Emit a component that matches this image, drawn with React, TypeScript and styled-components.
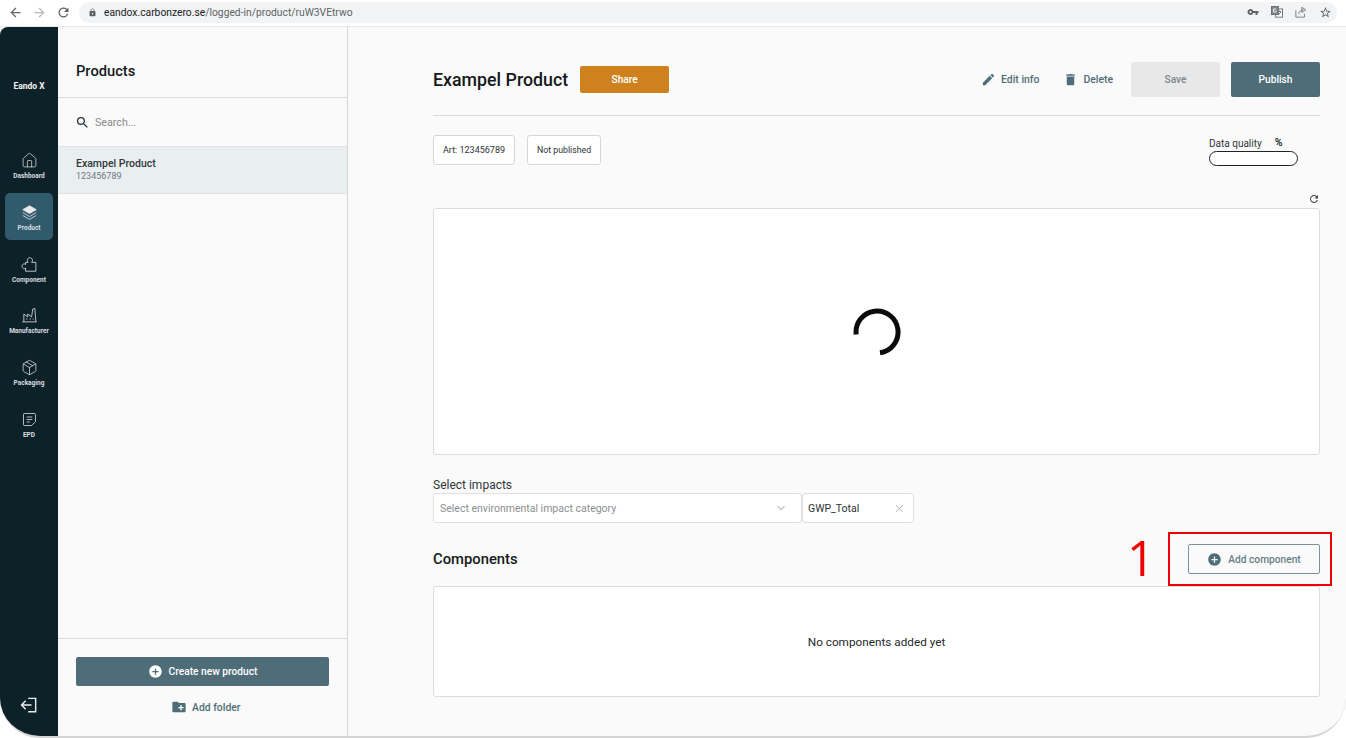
import styled, { createGlobalStyle } from "styled-components";
import { FC, ReactNode } from "react";
import { Home, Package } from "lucide-react";
import {
  MdArrowBack,
  MdArrowForward,
  MdRefresh,
  MdLock,
  MdVpnKey,
  MdStarBorder,
  MdSearch,
  MdEdit,
  MdDelete,
  MdAddCircle,
  MdCreateNewFolder,
  MdClose,
  MdKeyboardArrowDown,
} from "react-icons/md";

const GlobalStyle = createGlobalStyle`
  html, body { margin: 0; padding: 0; background: #ffffff; }
  body { font-family: Roboto, "Liberation Sans", sans-serif; width: 1346px; height: 738px; overflow: hidden; }
  * { box-sizing: border-box; }
`;

const Page = styled.div`
  position: relative;
  width: 1346px;
  height: 738px;
  display: flex;
  flex-direction: column;
  background: #ffffff;
  overflow: hidden;
`;

const BrowserBar = styled.div`
  height: 27px;
  flex: none;
  display: flex;
  align-items: center;
  padding: 0 9px 2px 8px;
  background: #ffffff;
  border-bottom: 1px solid #e6e7e8;
  color: #5f6368;
`;

const NavIcons = styled.div`
  display: flex;
  align-items: center;
  gap: 9px;
  width: 71px;
`;

const UrlPill = styled.div`
  flex: 1;
  height: 21px;
  padding: 0 5px 0 9px;
  display: flex;
  align-items: center;
  gap: 7px;
  border-radius: 11px;
  background: #f1f3f4;
`;

const UrlText = styled.span`
  flex: 1;
  font-size: 10.3px;
  color: #5f6368;
  b { font-weight: 400; color: #202124; }
`;

const UrlIcons = styled.div`
  display: flex;
  align-items: center;
  gap: 12px;
`;

const Frame = styled.div`
  flex: 1;
  min-height: 0;
  display: flex;
  background: #fafafa;
  border-bottom: 2px solid #d4d4d4;
  border-radius: 8px 0 40px 40px;
  overflow: hidden;
`;

const Sidebar = styled.nav`
  width: 58px;
  flex: none;
  display: flex;
  flex-direction: column;
  align-items: center;
  background: #0d2129;
  color: #e8eaeb;
`;

const Logo = styled.div`
  margin-top: 53px;
  height: 12px;
  line-height: 12px;
  font-size: 8.5px;
  font-weight: 700;
  color: #f2f4f4;
`;

const NavList = styled.div`
  margin-top: 49px;
  width: 100%;
  display: flex;
  flex-direction: column;
  align-items: center;
  gap: 4.8px;
`;

const NavItem = styled.div<{ $active?: boolean }>`
  width: 48px;
  height: 47px;
  padding-bottom: 7px;
  display: flex;
  flex-direction: column;
  align-items: center;
  justify-content: flex-end;
  gap: 3px;
  border-radius: 5px;
  background: ${(p) => (p.$active ? "#325a6d" : "transparent")};
`;

const NavLabel = styled.span`
  font-size: 6.5px;
  line-height: 9px;
  font-weight: 700;
  white-space: nowrap;
  color: #d9dee0;
`;

const NavSvg = styled.svg`
  width: 17px;
  height: 17px;
  fill: none;
  stroke: currentColor;
  stroke-width: 1.1;
`;

const SignOut = styled.svg`
  margin-top: auto;
  margin-bottom: 21px;
  width: 20px;
  height: 20px;
  fill: none;
  stroke: #eceeee;
  stroke-width: 1.7;
`;

const ProductsPanel = styled.aside`
  width: 290px;
  flex: none;
  display: flex;
  flex-direction: column;
  border-right: 1px solid #d6d6d6;
`;

const PanelTitle = styled.h2`
  margin: 0;
  height: 71px;
  padding: 35px 18px 0;
  font-size: 14.7px;
  line-height: 18px;
  font-weight: 500;
  color: #14191c;
  border-bottom: 1px solid #dcdcdc;
`;

const SearchRow = styled.div`
  height: 48px;
  padding: 0 18px 0 17px;
  display: flex;
  align-items: center;
  gap: 5px;
  font-size: 10.7px;
  color: #8a8a8a;
  svg { color: #2b3438; }
`;

const ProductRow = styled.div`
  height: 48px;
  padding: 11px 18px 0;
  background: #e9eef0;
  border-top: 1px solid #e2e2e2;
  border-bottom: 1px solid #e2e2e2;
  font-size: 10.5px;
  line-height: 12px;
  color: #30383c;
  font-weight: 500;
`;

const ProductNumber = styled.div`
  font-size: 9px;
  line-height: 12px;
  font-weight: 400;
  color: #6f7a7f;
`;

const PanelFooter = styled.div`
  margin-top: auto;
  height: 98px;
  padding: 18px 18px 0;
  border-top: 1px solid #dcdcdc;
  display: flex;
  flex-direction: column;
  align-items: flex-start;
`;

const Button = styled.button<{ $variant: "primary" | "orange" | "disabled" | "outline"; $width: number; $height: number }>`
  width: ${(p) => p.$width}px;
  height: ${(p) => p.$height}px;
  flex: none;
  display: flex;
  align-items: center;
  justify-content: center;
  gap: 6px;
  padding: 0;
  font-family: inherit;
  font-size: 10.2px;
  font-weight: 500;
  border-radius: 2px;
  border: ${(p) => (p.$variant === "outline" ? "1px solid #7e929b" : "none")};
  background: ${(p) =>
    p.$variant === "primary" ? "#4f6d78" : p.$variant === "orange" ? "#cf811e" : p.$variant === "disabled" ? "#e8e8e8" : "#fafafa"};
  color: ${(p) => (p.$variant === "disabled" ? "#7f8689" : p.$variant === "outline" ? "#667c86" : "#ffffff")};
  svg { color: ${(p) => (p.$variant === "outline" ? "#4f6d78" : "#ffffff")}; }
`;

const TextAction = styled.span`
  display: flex;
  align-items: center;
  gap: 5px;
  font-size: 10.4px;
  font-weight: 500;
  color: #4f6d78;
`;

const AddFolder = styled(TextAction)`
  margin: 13px 0 0 95px;
`;

const Main = styled.main`
  flex: 1;
  min-width: 0;
  padding: 35px 26px 0 85px;
  display: flex;
  flex-direction: column;
`;

const Header = styled.header`
  height: 54px;
  flex: none;
  display: flex;
  align-items: flex-start;
  border-bottom: 1px solid #dcdcdc;
`;

const Title = styled.h1`
  margin: 0 12px 0 0;
  font-size: 17.8px;
  line-height: 35px;
  font-weight: 500;
  color: #15191b;
`;

const ShareWrap = styled.div`
  padding-top: 4px;
`;

const HeaderActions = styled.div`
  margin-left: auto;
  display: flex;
  align-items: center;
  height: 35px;
`;

const Actions = styled.div`
  display: flex;
  gap: 24px;
  margin-right: 18px;
`;

const Publish = styled.div`
  display: flex;
  gap: 11px;
`;

const InfoRow = styled.div`
  height: 92px;
  flex: none;
  padding-top: 19px;
  display: flex;
  align-items: flex-start;
  gap: 12px;
`;

const Chip = styled.div`
  height: 30px;
  padding: 0 9px;
  display: flex;
  align-items: center;
  font-size: 9px;
  color: #2d3336;
  background: #ffffff;
  border: 1px solid #d6d6d6;
  border-radius: 3px;
`;

const StatusChip = styled(Chip)`
  font-size: 8.75px;
`;

const Quality = styled.div`
  margin-left: auto;
  margin-right: 22px;
  padding-top: 2px;
  width: 89px;
`;

const QualityLabel = styled.div`
  display: flex;
  gap: 13px;
  font-size: 10px;
  line-height: 14px;
  color: #2e3336;
  span { font-size: 10.5px; font-weight: 700; margin-top: -1px; }
`;

const QualityBar = styled.div`
  height: 15px;
  background: #ffffff;
  border: 1px solid #1d2326;
  border-radius: 8px;
`;

const ChartTools = styled.div`
  position: relative;
  flex: none;
  display: flex;
`;

const ChartBox = styled.div`
  height: 247px;
  flex: 1;
  display: flex;
  align-items: center;
  justify-content: center;
  background: #ffffff;
  border: 1px solid #dcdcdc;
  border-radius: 3px;
`;

const Spinner = styled.svg`
  width: 48px;
  height: 48px;
`;

const RefreshIcon = styled.div`
  position: absolute;
  top: -15px;
  right: 0;
  display: flex;
  color: #3d4448;
`;

const ImpactLabel = styled.div`
  margin-top: 22px;
  font-size: 12px;
  line-height: 16px;
  color: #31373a;
`;

const ImpactRow = styled.div`
  display: flex;
  height: 30px;
`;

const SelectBox = styled.div`
  width: 369px;
  padding: 0 12px 0 6px;
  display: flex;
  align-items: center;
  justify-content: space-between;
  font-size: 10.5px;
  color: #8b8f91;
  background: #ffffff;
  border: 1px solid #e0e0e0;
  border-radius: 3px;
  svg { color: #c5c8ca; }
`;

const TagBox = styled(SelectBox)`
  width: 112px;
  padding: 0 7px 0 5px;
  color: #2d3336;
`;

const ComponentsHead = styled.div`
  height: 63px;
  flex: none;
  padding-top: 21px;
  display: flex;
  align-items: flex-start;
  justify-content: space-between;
`;

const SectionTitle = styled.h3`
  margin: 0;
  font-size: 14.8px;
  line-height: 30px;
  font-weight: 500;
  color: #15191b;
`;

const EmptyBox = styled.div`
  height: 111px;
  flex: none;
  display: flex;
  align-items: center;
  justify-content: center;
  font-size: 11.75px;
  color: #24292c;
  background: #ffffff;
  border: 1px solid #dcdcdc;
  border-radius: 3px;
`;

const Callout = styled.div`
  position: absolute;
  left: 1168px;
  top: 532px;
  width: 164px;
  height: 54px;
  border: 2px solid #f00000;
`;

const CalloutNumber = styled.span`
  position: absolute;
  left: 1127px;
  top: 524px;
  font-family: "Open Sans", sans-serif;
  font-size: 49px;
  line-height: 66px;
  color: #f00000;
`;

const LayersIcon = () => (
  <NavSvg viewBox="0 0 24 24">
    <path d="M12 2.5 L21.5 8 L12 13.5 L2.5 8Z" fill="currentColor" />
    <path d="M2.5 12.2 L12 17.7 L21.5 12.2 M2.5 16.2 L12 21.7 L21.5 16.2" />
  </NavSvg>
);

const PieceIcon = () => (
  <NavSvg viewBox="0 0 24 24">
    <path d="M6.5 9 H10 C8 7 8.5 2.5 12.5 2.5 C16.5 2.5 17 7 15 9 H21 V21.5 H6.5 V17 C4.5 19 1.5 17.5 1.5 14.5 C1.5 11.5 4.5 10 6.5 12 Z" />
  </NavSvg>
);

const FactoryIcon = () => (
  <NavSvg viewBox="0 0 24 24">
    <path d="M2 21 H22 M4 21 V10 L9.5 14 V10 L15 14 L16.5 3 L19.5 2 L21 21" />
    <path d="M7 17 H9 M12 17 H14 M16.5 17 H18" />
  </NavSvg>
);

const EpdIcon = () => (
  <NavSvg viewBox="0 0 24 24">
    <path d="M5 3.5 H19 A1.5 1.5 0 0 1 20.5 5 V15 L15 20.5 H5 A1.5 1.5 0 0 1 3.5 19 V5 A1.5 1.5 0 0 1 5 3.5Z" />
    <path d="M8 8.5 H16 M8 12 H16 M8 15.5 H12.5" />
  </NavSvg>
);

const TranslateIcon = () => (
  <svg viewBox="0 0 14 14" width="12" height="12" fill="none" stroke="#5f6368" strokeWidth="1">
    <rect x="5.5" y="3.5" width="8" height="9.5" fill="#ffffff" />
    <rect x="0.5" y="0.5" width="8" height="9.5" fill="#80868b" />
    <path d="M8 6.5 H12 M10 5.5 V7 M8.5 10.5 L11.5 7" />
    <path d="M6 3.5 H3 V7 H6 V5.5" stroke="#ffffff" />
  </svg>
);

const ShareBoxIcon = () => (
  <svg viewBox="0 0 14 14" width="12" height="12" fill="none" stroke="#5f6368" strokeWidth="0.9">
    <path d="M1 5 V13 H11 V9 M4.5 9.5 C4.5 6 7 4.5 10 4.5 M8 1.5 L12.5 4.5 L8 7.5 Z" />
  </svg>
);

const navItems: { label: string; icon: ReactNode; active?: boolean }[] = [
  { label: "Dashboard", icon: <Home size={17} strokeWidth={1} /> },
  { label: "Product", icon: <LayersIcon />, active: true },
  { label: "Component", icon: <PieceIcon /> },
  { label: "Manufacturer", icon: <FactoryIcon /> },
  { label: "Packaging", icon: <Package size={17} strokeWidth={1} /> },
  { label: "EPD", icon: <EpdIcon /> },
];

const App: FC = () => (
  <Page>
    <GlobalStyle />
    <BrowserBar>
      <NavIcons>
        <MdArrowBack size={15} />
        <MdArrowForward size={15} color="#b4b7ba" />
        <MdRefresh size={15} />
      </NavIcons>
      <UrlPill>
        <MdLock size={9} />
        <UrlText>
          <b>eandox.carbonzero.se</b>/logged-in/product/ruW3VEtrwo
        </UrlText>
        <UrlIcons>
          <MdVpnKey size={12} />
          <TranslateIcon />
          <ShareBoxIcon />
          <MdStarBorder size={13} />
        </UrlIcons>
      </UrlPill>
    </BrowserBar>
    <Frame>
      <Sidebar>
        <Logo>Eando X</Logo>
        <NavList>
          {navItems.map((item) => (
            <NavItem key={item.label} $active={item.active}>
              {item.icon}
              <NavLabel>{item.label}</NavLabel>
            </NavItem>
          ))}
        </NavList>
        <SignOut viewBox="0 0 24 24">
          <path d="M11 4 H20 V20 H11 M15 12 H3 M8 7 L3 12 L8 17" />
        </SignOut>
      </Sidebar>
      <ProductsPanel>
        <PanelTitle>Products</PanelTitle>
        <SearchRow>
          <MdSearch size={15} />
          Search...
        </SearchRow>
        <ProductRow>
          Exampel Product
          <ProductNumber>123456789</ProductNumber>
        </ProductRow>
        <PanelFooter>
          <Button $variant="primary" $width={253} $height={29}>
            <MdAddCircle size={15} />
            Create new product
          </Button>
          <AddFolder>
            <MdCreateNewFolder size={16} />
            Add folder
          </AddFolder>
        </PanelFooter>
      </ProductsPanel>
      <Main>
        <Header>
          <Title>Exampel Product</Title>
          <ShareWrap>
            <Button $variant="orange" $width={89} $height={27}>Share</Button>
          </ShareWrap>
          <HeaderActions>
            <Actions>
              <TextAction>
                <MdEdit size={15} />
                Edit info
              </TextAction>
              <TextAction>
                <MdDelete size={15} />
                Delete
              </TextAction>
            </Actions>
            <Publish>
              <Button $variant="disabled" $width={89} $height={35}>Save</Button>
              <Button $variant="primary" $width={89} $height={35}>Publish</Button>
            </Publish>
          </HeaderActions>
        </Header>
        <InfoRow>
          <Chip>Art: 123456789</Chip>
          <StatusChip>Not published</StatusChip>
          <Quality>
            <QualityLabel>
              Data quality <span>%</span>
            </QualityLabel>
            <QualityBar />
          </Quality>
        </InfoRow>
        <ChartTools>
          <RefreshIcon>
            <MdRefresh size={12} />
          </RefreshIcon>
          <ChartBox>
            <Spinner viewBox="0 0 48 48">
              <path d="M3.2 26.5 A 21 21 0 1 1 27 44.8" fill="none" stroke="#0b0b0b" strokeWidth="5" />
            </Spinner>
          </ChartBox>
        </ChartTools>
        <ImpactLabel>Select impacts</ImpactLabel>
        <ImpactRow>
          <SelectBox>
            Select environmental impact category
            <MdKeyboardArrowDown size={16} />
          </SelectBox>
          <TagBox>
            GWP_Total
            <MdClose size={13} />
          </TagBox>
        </ImpactRow>
        <ComponentsHead>
          <SectionTitle>Components</SectionTitle>
          <Button $variant="outline" $width={132} $height={30}>
            <MdAddCircle size={15} />
            Add component
          </Button>
        </ComponentsHead>
        <EmptyBox>No components added yet</EmptyBox>
      </Main>
    </Frame>
    <CalloutNumber>1</CalloutNumber>
    <Callout />
  </Page>
);

export default App;
